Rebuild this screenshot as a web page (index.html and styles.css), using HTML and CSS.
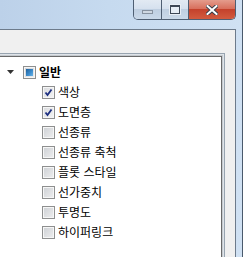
FILE: index.html
```html
<!DOCTYPE html>
<html lang="ko">
<head>
<meta charset="utf-8">
<link rel="stylesheet" href="styles.css">
</head>
<body>
<div class="window">
  <div class="titlebar">
    <div class="caption">
      <div class="btn min"><span class="glyph-min"></span></div>
      <div class="btn max"><span class="glyph-max"></span></div>
      <div class="btn close">
        <svg width="12" height="10" viewBox="0 0 12 10"><path d="M1.5 1 L10.5 9 M10.5 1 L1.5 9" stroke="#3a3f4a" stroke-width="4" stroke-linecap="square"/><path d="M1.5 1 L10.5 9 M10.5 1 L1.5 9" stroke="#ffffff" stroke-width="2" stroke-linecap="square"/></svg>
      </div>
    </div>
  </div>
  <div class="client">
    <div class="tree">
      <div class="row root">
        <svg class="exp" width="7" height="4" viewBox="0 0 7 4"><polygon points="0,0 7,0 3.5,4" fill="#333"/></svg>
        <span class="cb mixed"></span>
        <span class="label bold">일반</span>
      </div>
      <div class="row child"><span class="cb checked"><svg width="9" height="9" viewBox="0 0 9 9"><path d="M1.5 4.5 L3.5 7 L7.5 1.5" fill="none" stroke="#1d2f80" stroke-width="1.8"/></svg></span><span class="label">색상</span></div>
      <div class="row child"><span class="cb checked"><svg width="9" height="9" viewBox="0 0 9 9"><path d="M1.5 4.5 L3.5 7 L7.5 1.5" fill="none" stroke="#1d2f80" stroke-width="1.8"/></svg></span><span class="label">도면층</span></div>
      <div class="row child"><span class="cb"></span><span class="label">선종류</span></div>
      <div class="row child"><span class="cb"></span><span class="label">선종류 축척</span></div>
      <div class="row child"><span class="cb"></span><span class="label">플롯 스타일</span></div>
      <div class="row child"><span class="cb"></span><span class="label">선가중치</span></div>
      <div class="row child"><span class="cb"></span><span class="label">투명도</span></div>
      <div class="row child"><span class="cb"></span><span class="label">하이퍼링크</span></div>
    </div>
  </div>
</div>
</body>
</html>
```
FILE: styles.css
```css
html, body {
  margin: 0;
  padding: 0;
  width: 243px;
  height: 257px;
  overflow: hidden;
  font-family: "Noto Sans CJK KR", "Noto Sans", sans-serif;
}
.window {
  width: 243px;
  height: 257px;
  box-sizing: border-box;
  display: flex;
  flex-direction: column;
  background: linear-gradient(90deg, #bcd1e9 0%, #c6daef 45%, #d0e1f3 100%);
  border-right: 1px solid #4a5a6c;
  padding-right: 6px;
}
.titlebar {
  height: 29px;
  flex-shrink: 0;
  display: flex;
  justify-content: flex-end;
}
.caption {
  display: flex;
  height: 20px;
  box-sizing: border-box;
  border: 1px solid #4f5f73;
  border-top: none;
  border-radius: 0 0 5px 5px;
  overflow: hidden;
}
.btn {
  height: 100%;
  display: flex;
  align-items: center;
  justify-content: center;
  box-sizing: border-box;
}
.btn.min {
  width: 28px;
  background: linear-gradient(180deg, #e2eaf3 0%, #d6e1ee 45%, #bfcfe1 50%, #cad9e9 100%);
  border-right: 1px solid #4f5f73;
}
.btn.max {
  width: 27px;
  background: linear-gradient(180deg, #e2eaf3 0%, #d6e1ee 45%, #bfcfe1 50%, #cad9e9 100%);
  border-right: 1px solid #4f5f73;
}
.btn.close {
  width: 46px;
  background: linear-gradient(180deg, #e49c8c 0%, #d8705d 45%, #c4422c 50%, #d25b3f 100%);
}
.glyph-min {
  width: 11px;
  height: 4px;
  margin-top: 5px;
  box-sizing: border-box;
  border: 1px solid #8792a0;
  background: #cfd8e2;
}
.glyph-max {
  width: 10px;
  height: 9px;
  box-sizing: border-box;
  border: 1px solid #3d4756;
  border-top-width: 2px;
  background: #e6edf5;
  box-shadow: 0 0 0 1px #e8eef5;
}
.client {
  flex: 1;
  background: #f0f0f0;
  border-top: 1px solid #6d7b8b;
  border-right: 1px solid #6d7b8b;
  padding-top: 23px;
  overflow: hidden;
}
.tree {
  margin-left: -10px;
  margin-right: 10px;
  height: 260px;
  background: #ffffff;
  border: 1px solid #98a4b0;
  box-shadow: inset 0 0 0 1px #dfe4e9, inset 0 0 0 2px #c4c9ce, inset 0 0 0 3px #6a6a6a;
  padding-top: 8px;
  box-sizing: border-box;
}
.row {
  height: 20px;
  display: flex;
  align-items: center;
  font-size: 12px;
  color: #000;
}
.row.root {
  padding-left: 16px;
}
.row.child {
  padding-left: 51px;
}
.exp {
  margin-right: 9px;
}
.label {
  margin-left: 3px;
  line-height: 20px;
}
.label.bold {
  font-weight: bold;
}
.cb {
  width: 13px;
  height: 13px;
  box-sizing: border-box;
  border: 1px solid #8e8f8f;
  background: linear-gradient(135deg, #cdd0d4 0%, #eeeeef 100%);
  box-shadow: inset 0 0 0 1px #f6f6f6;
  display: flex;
  align-items: center;
  justify-content: center;
  flex-shrink: 0;
}
.cb.checked {
  background: linear-gradient(135deg, #d9dbde 0%, #f4f4f4 100%);
}
.cb.mixed::before {
  content: "";
  width: 7px;
  height: 7px;
  background: linear-gradient(135deg, #1d5f9a 0%, #3f8fd0 60%, #6bb5e6 100%);
}
```
